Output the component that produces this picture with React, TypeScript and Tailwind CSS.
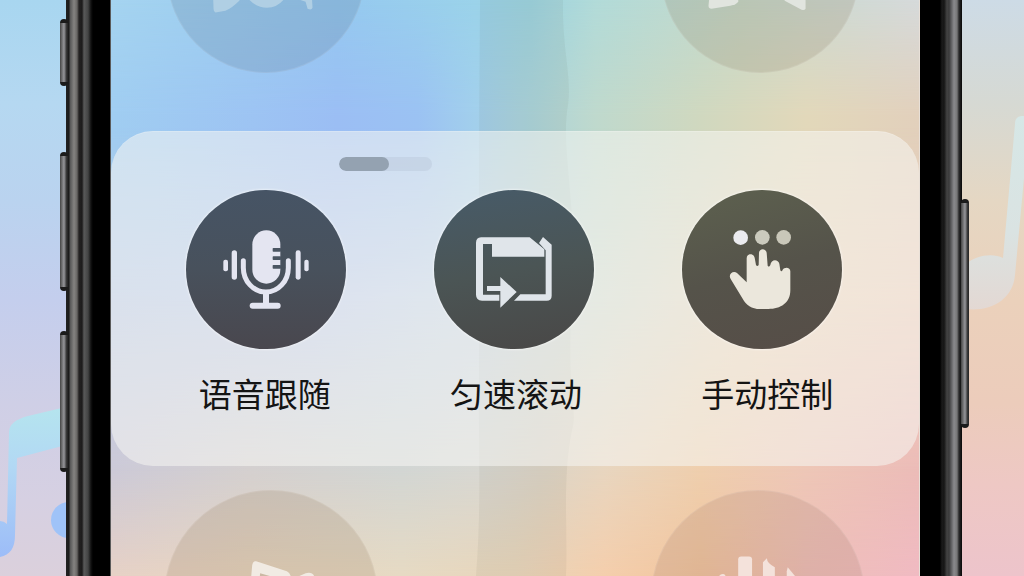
import React from "react";

const GLYPH_BOX = "16 29 480 477";

function MicIcon() {
  return (
    <svg viewBox={GLYPH_BOX} className="size-full" aria-hidden="true">
      <g fill="#e4e5f1">
        <rect x="215" y="150" width="84" height="160" rx="42" />
        <rect x="128" y="238" width="14" height="35" rx="6" />
        <rect x="153" y="210" width="16" height="88" rx="8" />
        <rect x="345" y="210" width="15" height="88" rx="7" />
        <rect x="371" y="238" width="13" height="35" rx="6" />
        <rect x="247" y="336" width="18" height="36" />
        <rect x="207" y="367" width="93" height="18" rx="9" />
      </g>
      <path d="M188 241V262A67.500 73 0 0 0 323 262V241" fill="none" stroke="#e4e5f1" strokeWidth="15" strokeLinecap="round" />
      <g fill="#4a5562">
        <rect x="276" y="203" width="25" height="11" rx="2" />
        <rect x="276" y="228" width="25" height="11" rx="2" />
        <rect x="276" y="254" width="25" height="11" rx="2" />
      </g>
    </svg>
  );
}

function ScrollIcon() {
  return (
    <svg viewBox={GLYPH_BOX} className="size-full" aria-hidden="true">
      <g fill="#e0e5ea">
        <path d="M157 171H303L347 207V229H190V191H163V343H212V361H160Q142 359 142 343V188Q142 172 157 171Z" />
        <path d="M343 170L369 193V346Q369 361 354 361H256L275 342H351V210L331 188Z" />
        <path d="M175 317H215V290L264 335L215 382V332H175Z" />
      </g>
    </svg>
  );
}

function HandIcon() {
  return (
    <svg viewBox={GLYPH_BOX} className="size-full" aria-hidden="true">
      <circle cx="192" cy="172" r="22" fill="#ebebef" />
      <circle cx="257" cy="171" r="22" fill="#cbcabd" />
      <circle cx="321" cy="171" r="22" fill="#c9c7b9" />
      <path
        fill="#ebe7dc"
        d="M210 306V234C210 218 231 218 234 232L238 254Q242 260 246 254L247 217C248 203 268 203 270 217L273 256Q277 262 281 254C283 235 305 236 308 250L311 270Q315 276 318 268C324 259 341 260 341 273V330C341 368 312 386 275 386H250C225 386 208 374 198 355L162 296C153 281 170 269 181 278Z"
      />
    </svg>
  );
}

const modes = [
  { id: "voice", label: "语音跟随", Icon: MicIcon, tone: "bg-linear-to-b from-[#465465] via-[#48515c] to-[#49474e]" },
  { id: "steady", label: "匀速滚动", Icon: ScrollIcon, tone: "bg-[linear-gradient(170deg,#475b69,#4b5555_50%,#494746)]" },
  { id: "manual", label: "手动控制", Icon: HandIcon, tone: "bg-[linear-gradient(165deg,#5d614f,#55534a_50%,#564d47)]" },
];

function Wallpaper() {
  return (
    <div className="absolute inset-0" aria-hidden="true">
      <div className="absolute inset-0 bg-[linear-gradient(90deg,#a5d4f0,#95c9f0_28%,#9bd3ea_45%,#9dd3df_52%,#b2dbd9_60%,#c6dacb_78%,#d6dadb)]" />
      <div className="absolute inset-0 bg-[linear-gradient(90deg,#a0cdf1,#9bbef4_28%,#9bc2f3_38%,#a2cfec_45%,#acd4da_52%,#bfd9cd_60%,#d0d8bf_73%,#e2d8ba_86%,#e2d0bc)] mask-[linear-gradient(transparent,black_20%)]" />
      <div className="absolute inset-0 bg-[linear-gradient(90deg,#b8c8e6,#bccbec_25%,#c7d6e6_45%,#d2dbd0_60%,#ecd7bb_80%,#edcdb9)] mask-[linear-gradient(transparent_22%,black_52%)]" />
      <div className="absolute inset-0 bg-[linear-gradient(90deg,#cccad8,#d4d0d0_17%,#d2d6d4_36%,#d8d8d3_46%,#dcd5c8_53%,#e8d6c0_61%,#efcfae_73%,#eec7b7_86%,#ecbcb8)] mask-[linear-gradient(transparent_52%,black_81%)]" />
      <div className="absolute inset-0 bg-[linear-gradient(90deg,#e6d1c6,#e8d6c0_17%,#e6dac3_36%,#e8d5ba_50%,#f4ceac_61%,#f1c59e_73%,#eebfb8_86%,#f0bac2)] mask-[linear-gradient(transparent_81%,black)]" />
      <svg viewBox="111 0 808 576" preserveAspectRatio="none" className="absolute inset-0 size-full">
        <path d="M480 0H563C562 50 572 75 568 105C560 150 578 200 572 300C566 390 578 410 572 430C562 480 568 530 566 576H476C482 500 478 440 479 380V150Z" fill="#4a4a3a" opacity="0.06" />
      </svg>
    </div>
  );
}

function LeftRail() {
  return (
    <div className="relative z-10 w-[45px] shrink-0 border-r border-[#5a5a5a] bg-[linear-gradient(90deg,#222_0px,#1b1b1b_3px,#555_4px,#858381_8px,#696765_11px,#242222_13px,#1d1b1b_16px,#595959_18px,#444_22px,#111_25px,#000_27px)]">
      <SideKey className="-left-[6px] top-[19px] h-[67px]" />
      <SideKey className="-left-[6px] top-[152px] h-[139px]" />
      <SideKey className="-left-[6px] top-[331px] h-[141px]" />
    </div>
  );
}

function RightRail() {
  return (
    <div className="relative z-10 w-[43px] shrink-0 border-l border-[#e8e0d8] bg-[linear-gradient(90deg,#000_20px,#1a1a1a_22px,#151515_24px,#444_27px,#3a3a3b_29px,#8a8a8c_34px,#777_37px,#2a2a2a_39px,#080808_42px)]">
      <SideKey className="-right-[7px] top-[199px] h-[229px]" />
    </div>
  );
}

function SideKey({ className }: { className: string }) {
  return (
    <div
      className={`absolute w-2 rounded-sm border-y-4 border-[#1b1b1b] bg-[linear-gradient(90deg,#444,#6f6f70_25%,#96969a_50%,#3a3a3a_80%,#222)] ${className}`}
    />
  );
}

function LeftNote() {
  return (
    <svg viewBox="0 0 66 576" preserveAspectRatio="xMinYMin meet" className="absolute inset-0 size-full" aria-hidden="true">
      <defs>
        <linearGradient id="noteBlue" x1="0" y1="405" x2="0" y2="558" gradientUnits="userSpaceOnUse">
          <stop offset="0" stopColor="#b5e5ee" />
          <stop offset="0.4" stopColor="#b2d8f4" />
          <stop offset="1" stopColor="#9cbcf8" />
        </linearGradient>
      </defs>
      <path fill="url(#noteBlue)" d="M66 407L28 416Q9 421 9 432L7 524Q4 521 0 521V557C10 555 15 548 15 535L17 458L66 445Z" />
      <circle cx="69" cy="520" r="18" fill="#9fc3f8" />
    </svg>
  );
}

function RightNote() {
  return (
    <svg viewBox="962 0 62 576" preserveAspectRatio="xMaxYMin meet" className="absolute inset-0 size-full" aria-hidden="true">
      <defs>
        <linearGradient id="notePale" x1="0" y1="116" x2="0" y2="310" gradientUnits="userSpaceOnUse">
          <stop offset="0" stopColor="#d6e7e6" />
          <stop offset="0.6" stopColor="#dae3e2" />
          <stop offset="1" stopColor="#e3d8d3" />
        </linearGradient>
      </defs>
      <path fill="url(#notePale)" d="M1024 116H1021Q1015 117 1015 124L1003 258C993 253 976 255 966 264V309C990 312 1013 300 1015 275L1024 178Z" />
    </svg>
  );
}

export default function App() {
  return (
    <main className="flex h-screen overflow-hidden font-['Noto_Sans_CJK_SC',sans-serif]">
      <div className="relative w-[66px] shrink-0 bg-[linear-gradient(#a8d6f0,#b5d8f1_18%,#bad3ef_35%,#c4ceed_52%,#cfcfe6_70%,#d6d0e2_87%,#dbd0dc)]">
        <LeftNote />
      </div>
      <LeftRail />

      <section className="relative flex min-w-0 flex-1 flex-col overflow-hidden">
        <Wallpaper />

        <div className="relative flex h-[131px] shrink-0 items-end justify-between overflow-hidden pr-15 pb-[58px] pl-14" aria-hidden="true">
          <div className="size-[198px] shrink-0 rounded-full border border-white/10 bg-[#62809c]/25">
            <svg viewBox="168 -126 198 198" className="size-full" fill="#b0cfe4">
              <path d="M213 -20H250L240 0Q232 8 226 10L216 12Q214 11 214 8Z" />
              <path d="M246 -6Q255 7 268 7Q281 7 288 -6Z" />
              <path d="M300 -10H313L314 7Q313 10 309 8L307 1L298 -2Z" />
            </svg>
          </div>
          <div className="size-[198px] shrink-0 rounded-full border border-white/10 bg-[#857a60]/20">
            <svg viewBox="661 -126 198 198" className="size-full" fill="#e1e5df">
              <path d="M710 -16H738V1Q736 4 730 5L711 8Q708 8 708 5Z" />
              <path d="M780 -12H806V8Q805 10 802 9L785 0Z" />
            </svg>
          </div>
        </div>

        <div className="relative shrink-0 rounded-[42px] border-t border-white/20 bg-[#f6f6f3]/55 pt-[25px] pb-[53px]">
          <div className="ml-57 h-3.5 w-[93px] overflow-hidden rounded-full bg-[#a8b2c6]/25">
            <div className="h-full w-[50px] rounded-full bg-[#94a2b1]" />
          </div>

          <div className="mt-[19px] grid grid-cols-3 justify-items-center pr-[33px] pl-[31px]">
            {modes.map(({ id, Icon, tone }) => (
              <button
                key={id}
                id={id}
                type="button"
                className={`h-[159px] w-40 cursor-pointer rounded-full shadow-[0_0_2px_1px_rgba(255,255,255,0.5)] ${tone}`}
              >
                <Icon />
              </button>
            ))}
          </div>

          <div className="mt-6 grid grid-cols-3 justify-items-center pr-[26px] pl-7 text-[33px] leading-10 text-[#141414]">
            {modes.map(({ id, label }) => (
              <label key={id} htmlFor={id} className="cursor-pointer whitespace-nowrap">
                {label}
              </label>
            ))}
          </div>
        </div>

        <div className="relative flex min-h-0 flex-1 items-start justify-between overflow-hidden pt-6 pr-[54px] pl-[53px]" aria-hidden="true">
          <div className="size-[214px] shrink-0 rounded-full border border-white/10 bg-[#8f7a5c]/20">
            <svg viewBox="164 490 214 214" className="size-full">
              <path fill="#f1ebe3" d="M256 561L287 571Q291 573 291 577V600H249L252 565Q253 560 256 561Z" />
              <path fill="#cbb9a4" d="M260 573L274 577V600H258Z" />
              <path fill="#f1ebe3" d="M290 580L306 573Q313 571 315 577V600H290Z" />
            </svg>
          </div>
          <div className="size-[214px] shrink-0 rounded-full border border-white/10 bg-[#a07a6a]/20">
            <svg viewBox="651 490 214 214" className="size-full" fill="#f4e2db">
              <path d="M718 577Q720 573 724 574L727 578V600H718Z" />
              <rect x="738" y="556" width="14" height="44" rx="3" />
              <path d="M763 562L767 558Q767 563 775 567V600H763Z" />
              <path d="M787 571L788 567L798 579V600H787Z" />
            </svg>
          </div>
        </div>
      </section>

      <RightRail />
      <div className="relative w-[62px] shrink-0 bg-[linear-gradient(#cddbe6,#d6d9d3_18%,#e5d7c3_35%,#ebd1bb_52%,#ecccbb_70%,#eec8c4_84%,#edc4cb)]">
        <RightNote />
      </div>
    </main>
  );
}
